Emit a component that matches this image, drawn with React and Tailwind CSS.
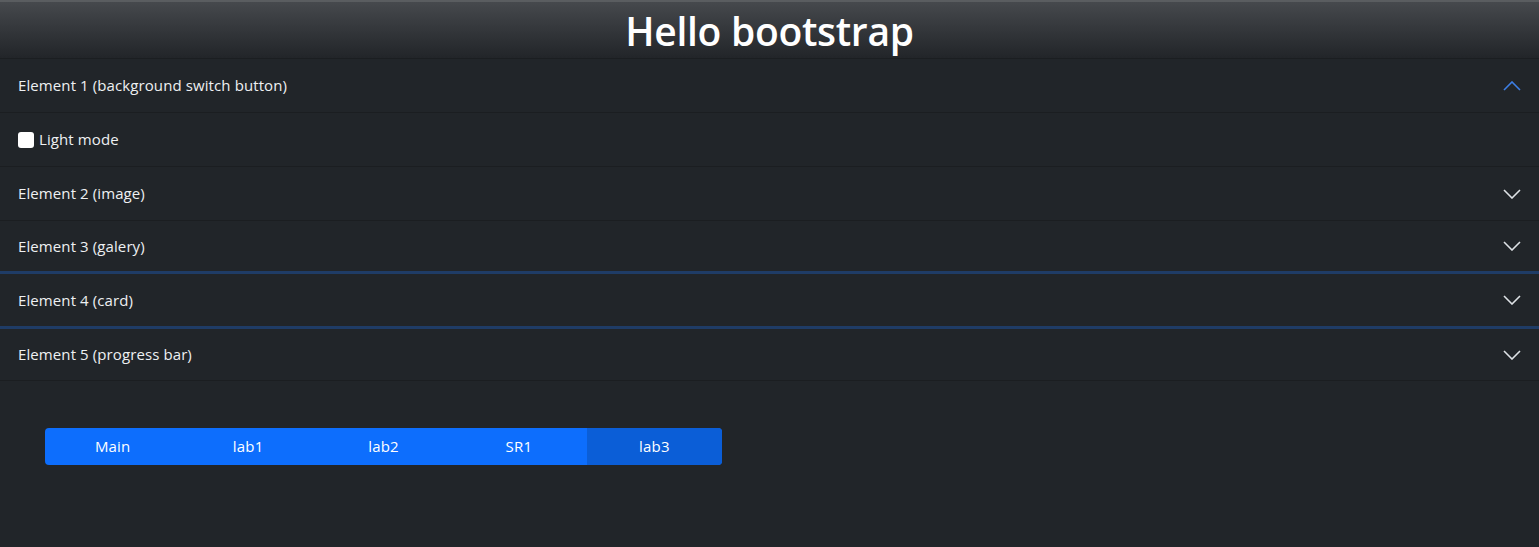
import React, { useState } from 'react'

const items = [
  { title: 'Element 1 (background switch button)', h: 'h-[54px]', border: 'border-b border-[#1b1e21]' },
  { title: 'Element 2 (image)', h: 'h-[54px]', border: 'border-b border-[#1b1e21]' },
  { title: 'Element 3 (galery)', h: 'h-[53px]', border: 'border-b-[3px] border-[#1f3c66]' },
  { title: 'Element 4 (card)', h: 'h-[55px]', border: 'border-b-[3px] border-[#1f3c66]' },
  { title: 'Element 5 (progress bar)', h: 'h-[52px]', border: 'border-b border-[#1b1e21]' },
]

const tabs = ['Main', 'lab1', 'lab2', 'SR1', 'lab3']

function Chevron({ up }) {
  return (
    <svg width="18" height="10" viewBox="0 0 18 10" fill="none" className={up ? 'text-[#3d7fe6]' : 'text-[#dee2e6]'}>
      <path d={up ? 'M1 9 L9 1 L17 9' : 'M1 1 L9 9 L17 1'} stroke="currentColor" strokeWidth="1.6" />
    </svg>
  )
}

export default function App() {
  const [open, setOpen] = useState(0)
  const [light, setLight] = useState(false)

  return (
    <div className="min-h-[547px] bg-[#212529] text-[#eef0f2]" style={{ fontFamily: '"Open Sans", "Noto Sans", sans-serif' }}>
      <div className="h-[59px] border-t-2 border-[#5a5d60] border-b border-b-[#1b1e21] bg-gradient-to-b from-[#46494d] to-[#222529] flex items-center justify-center">
        <h1 className="text-[39px] font-semibold leading-none tracking-[-0.3px] text-white">Hello bootstrap</h1>
      </div>

      {items.map((item, i) => (
        <div key={item.title}>
          <button
            onClick={() => setOpen(open === i ? -1 : i)}
            className={`w-full flex items-center justify-between pl-[18px] pr-[18px] text-[15px] tracking-[0.1px] ${item.h} ${open === i ? 'border-b border-[#1b1e21]' : item.border}`}
          >
            <span>{item.title}</span>
            <Chevron up={open === i} />
          </button>
          {open === i && i === 0 && (
            <div className="h-[54px] flex items-center pl-[18px] border-b border-[#1b1e21] text-[15px] tracking-[0.1px]">
              <input
                type="checkbox"
                checked={light}
                onChange={e => setLight(e.target.checked)}
                className="appearance-none w-4 h-4 rounded-[3px] bg-white mr-[5px]"
              />
              <label>Light mode</label>
            </div>
          )}
        </div>
      ))}

      <div className="mt-[47px] ml-[45px] w-[677px] h-[37px] flex rounded-[4px] overflow-hidden bg-[#0d6efd] text-[15px] tracking-[0.2px] text-white">
        {tabs.map((t, i) => (
          <div key={t} className={`flex-1 flex items-center justify-center ${i === 4 ? 'bg-[#0b5ed7]' : ''}`}>
            {t}
          </div>
        ))}
      </div>
    </div>
  )
}
